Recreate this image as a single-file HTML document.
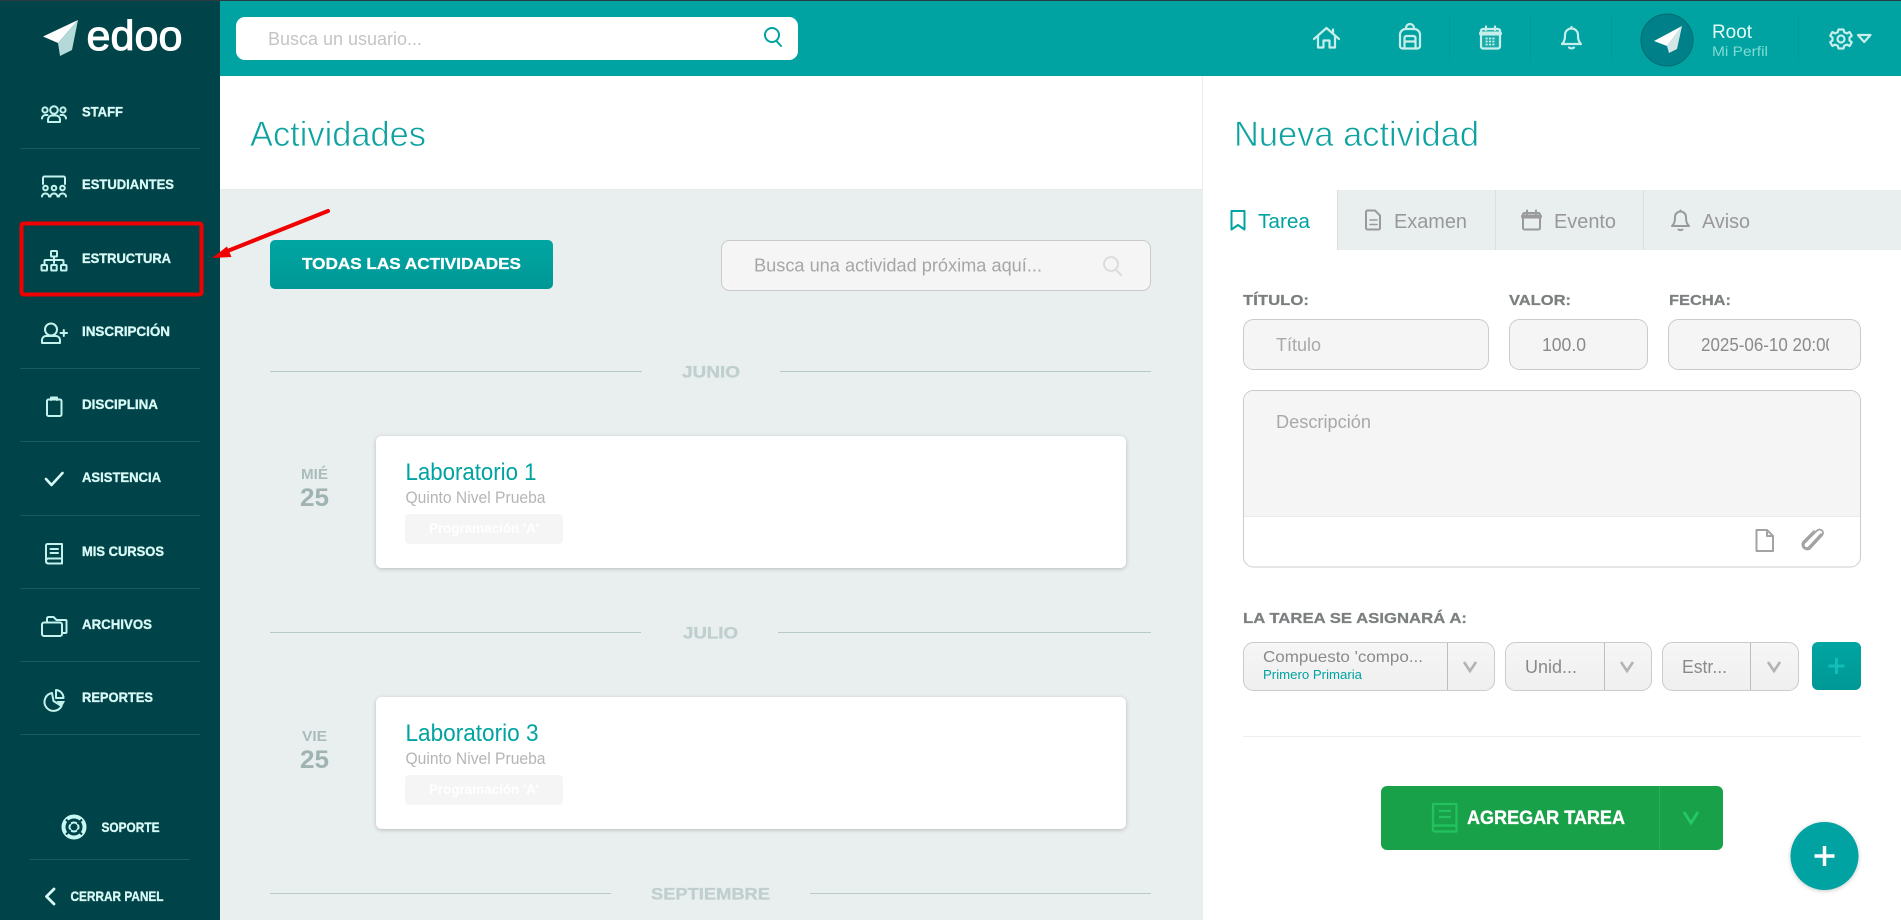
<!DOCTYPE html>
<html lang="es"><head><meta charset="utf-8"><title>Edoo - Actividades</title>
<style>
html,body{margin:0;padding:0;width:1901px;height:920px;overflow:hidden;background:#e9eeee}
svg{display:block}
text{font-family:"Liberation Sans",sans-serif}
.nav{font-size:14px;font-weight:700;fill:#d8f9f5;stroke:#d8f9f5;stroke-width:.35}
.ic{fill:none;stroke:#c4f3ee;stroke-width:2;stroke-linecap:round;stroke-linejoin:round}
.hi{fill:none;stroke:#c8eeeb;stroke-width:2.2;stroke-linecap:round;stroke-linejoin:round}
.tb{fill:none;stroke:#9a9a9a;stroke-width:2;stroke-linecap:round;stroke-linejoin:round}
.sep{stroke:#1b5a5e;stroke-width:1}
.lbl{font-size:15px;font-weight:700;fill:#7b7f7f;stroke:#7b7f7f;stroke-width:.25}
.ph{font-size:18px;fill:#a9a9a9}
.box{fill:#f5f5f5;stroke:#c9cccc;stroke-width:1}
.mes{font-size:17px;font-weight:700;fill:#bfcfce;stroke:#bfcfce;stroke-width:.3}
.ln{stroke:#b9c9c8;stroke-width:1}
.chev{fill:none;stroke:#b3b3b3;stroke-width:2.6}
.ttl{font-size:35px;fill:#0ea3a1;stroke:#fff;stroke-width:.7}
</style></head><body>
<svg width="1901" height="920" viewBox="0 0 1901 920" xmlns="http://www.w3.org/2000/svg">
<defs>
<linearGradient id="tg" x1="0" y1="0" x2="0" y2="1"><stop offset="0" stop-color="#00a5a2"/><stop offset="1" stop-color="#009896"/></linearGradient>
<linearGradient id="sg" x1="0" y1="0" x2="0" y2="1"><stop offset="0" stop-color="#f6f6f6"/><stop offset="1" stop-color="#efefef"/></linearGradient>
<filter id="sh" x="-5%" y="-10%" width="110%" height="125%"><feDropShadow dx="0" dy="1" stdDeviation="2" flood-color="#000" flood-opacity=".22"/></filter>
<clipPath id="fc"><rect x="1690" y="320" width="139" height="50"/></clipPath>
</defs>

<!-- base -->
<rect width="1901" height="920" fill="#e9eeee"/>
<rect x="220" y="76" width="982" height="114" fill="#fff"/>
<rect x="220" y="189" width="982" height="1" fill="#e6eaea"/>
<rect x="1203" y="76" width="698" height="844" fill="#fff"/>
<rect x="1203" y="190" width="698" height="60" fill="#e9eeee"/>

<!-- header -->
<rect x="220" y="0" width="1681" height="76" fill="#00a3a1"/>
<rect x="0" y="0" width="1901" height="1" fill="#2a3c40"/>
<rect x="236" y="17" width="562" height="43" rx="9" fill="#fff"/>
<text x="268" y="45" font-size="18" fill="#c4c4c4" textLength="154" lengthAdjust="spacingAndGlyphs">Busca un usuario...</text>
<g fill="none" stroke="#00a3a1" stroke-width="2" stroke-linecap="round"><circle cx="772" cy="35" r="7"/><path d="M776.500 41 L781 46"/></g>

<path d="M1449.500 16V61M1530.500 16V61M1611.500 16V61M1798.500 16V61" stroke="#019a98" stroke-width="1"/>
<!-- home -->
<g class="hi"><path d="M1314 39 L1326.500 28 L1339 39"/><path d="M1318 36 V47.500 H1323.500 V40.500 H1329.500 V47.500 H1335 V36"/><path d="M1333 29.500 V33"/></g>
<!-- backpack -->
<g class="hi"><path d="M1400 34 a6 6 0 0 1 6 -5 h8 a6 6 0 0 1 6 5 V46 a2.500 2.500 0 0 1 -2.500 2.500 H1402.500 A2.500 2.500 0 0 1 1400 46 Z"/><path d="M1406 28 a4 4 0 0 1 8 0"/><path d="M1404.500 48 V38 a2 2 0 0 1 2 -2 h7 a2 2 0 0 1 2 2 V48"/><path d="M1405 41.500 H1415"/></g>
<!-- calendar -->
<g class="hi"><rect x="1481" y="29" width="19" height="19.500" rx="2" fill="#c8eeeb" fill-opacity=".12"/><path d="M1481 33.500 H1500" stroke-width="4"/><path d="M1486 26.500 V30M1495 26.500 V30"/><path d="M1485.500 38.500 h10M1485.500 41.500 h10M1485.500 44.500 h10" stroke-width="1.800" stroke-dasharray="2.200 1.200" stroke-linecap="butt"/></g>
<!-- bell -->
<g class="hi"><path d="M1562 44 C1565 41 1565 38 1565 35 a6.500 6.500 0 0 1 13 0 C1578 38 1578 41 1581 44 Z"/><path d="M1571.500 27 V28.500"/><path d="M1569 47.500 a3 2 0 0 0 5 0" fill="#c8eeeb"/></g>
<!-- avatar -->
<circle cx="1667" cy="40" r="26" fill="#008088" stroke="#016c70" stroke-width="1"/>
<path d="M1654 41 L1682 26 L1667 46 Z" fill="#fff"/>
<path d="M1682 26 L1677 49 L1669 53 L1667 46 Z" fill="#d3e6e6"/>
<text x="1712" y="38" font-size="19" fill="#e4fbf8" textLength="40" lengthAdjust="spacingAndGlyphs">Root</text>
<text x="1712" y="56" font-size="14" fill="#7fdcd4" textLength="56" lengthAdjust="spacingAndGlyphs">Mi Perfil</text>
<!-- gear -->
<g class="hi" stroke-width="1.900"><circle cx="1841" cy="39" r="3.500"/><path d="M1838.500 29.500 h5 l.8 2.800 2.700 1.100 2.600 -1.400 2.200 3.800 -2.300 1.800 v2.800 l2.300 1.800 -2.200 3.800 -2.600 -1.400 -2.700 1.100 -.8 2.800 h-5 l-.8 -2.800 -2.700 -1.100 -2.600 1.400 -2.200 -3.800 2.300 -1.800 v-2.800 l-2.300 -1.800 2.200 -3.800 2.600 1.400 2.700 -1.100 Z"/><path d="M1858 35 H1870.500 L1864.200 42 Z"/></g>

<!-- sidebar -->
<rect x="0" y="1" width="220" height="919" fill="#004349"/>
<path d="M43 36.500 L78 20 L58 43 Z" fill="#fff"/>
<path d="M78 20 L72 50 L60 56 L58 43 Z" fill="#b3d9d8"/>
<text x="86.500" y="50" font-size="42" fill="#fff" stroke="#fff" stroke-width="1" textLength="96" lengthAdjust="spacingAndGlyphs">edoo</text>

<path class="sep" d="M20 148.500H200M20 368.500H200M20 441.500H200M20 515.500H200M20 588.500H200M20 661.500H200M20 734.500H200M30 859.500H190"/>

<text class="nav" x="82" y="116.500" textLength="41" lengthAdjust="spacingAndGlyphs">STAFF</text>
<text class="nav" x="82" y="189" textLength="92" lengthAdjust="spacingAndGlyphs">ESTUDIANTES</text>
<text class="nav" x="82" y="263" textLength="89" lengthAdjust="spacingAndGlyphs">ESTRUCTURA</text>
<text class="nav" x="82" y="336" textLength="88" lengthAdjust="spacingAndGlyphs">INSCRIPCIÓN</text>
<text class="nav" x="82" y="409" textLength="76" lengthAdjust="spacingAndGlyphs">DISCIPLINA</text>
<text class="nav" x="82" y="482" textLength="79" lengthAdjust="spacingAndGlyphs">ASISTENCIA</text>
<text class="nav" x="82" y="556" textLength="82" lengthAdjust="spacingAndGlyphs">MIS CURSOS</text>
<text class="nav" x="82" y="629" textLength="70" lengthAdjust="spacingAndGlyphs">ARCHIVOS</text>
<text class="nav" x="82" y="702" textLength="71" lengthAdjust="spacingAndGlyphs">REPORTES</text>
<text class="nav" x="101.500" y="832" textLength="58" lengthAdjust="spacingAndGlyphs">SOPORTE</text>
<text class="nav" x="70.500" y="901" textLength="93" lengthAdjust="spacingAndGlyphs">CERRAR PANEL</text>

<!-- staff icon -->
<g class="ic" stroke-width="1.900"><circle cx="54" cy="110" r="3.800"/><circle cx="45" cy="110" r="2.600"/><circle cx="63" cy="110" r="2.600"/><path d="M48 122 v-2.500 a4 4 0 0 1 4 -4 h4 a4 4 0 0 1 4 4 V122 Z"/><path d="M42 118.500 a3.500 3.500 0 0 1 3.500 -3.500 h2M66 118.500 a3.500 3.500 0 0 0 -3.500 -3.500 h-2"/></g>
<!-- estudiantes icon -->
<g class="ic" stroke-width="1.900"><path d="M43 184 V178 a1.500 1.500 0 0 1 1.500 -1.500 h19 a1.500 1.500 0 0 1 1.500 1.500 V184"/><circle cx="45.500" cy="188" r="2.300"/><circle cx="54" cy="188" r="2.300"/><circle cx="62.500" cy="188" r="2.300"/><path d="M42 196.500 a3.500 3 0 0 1 7 0M50.500 196.500 a3.500 3 0 0 1 7 0M59 196.500 a3.500 3 0 0 1 7 0"/></g>
<!-- estructura icon -->
<g class="ic" stroke-width="1.900"><rect x="51" y="251" width="6" height="5.500" rx=".8"/><path d="M54 257 V263M44.500 264.500 V261 a1 1 0 0 1 1 -1 h17 a1 1 0 0 1 1 1 V264.500"/><rect x="41.500" y="265" width="5.500" height="5.500" rx=".8"/><rect x="51.200" y="265" width="5.500" height="5.500" rx=".8"/><rect x="61" y="265" width="5.500" height="5.500" rx=".8"/></g>
<!-- inscripcion icon -->
<g class="ic" stroke-width="1.900"><circle cx="51" cy="329.500" r="6"/><path d="M42 343 v-3 a4 4 0 0 1 4 -4 h10 a4 4 0 0 1 4 4 v3 Z"/><path d="M60.500 333 H67M63.800 330 V336"/></g>
<!-- disciplina icon -->
<g class="ic" stroke-width="1.900"><rect x="47" y="399.500" width="14.500" height="16.500" rx="1.500"/><path d="M51 400 V397.500 h6 V400" /></g>
<!-- asistencia icon -->
<path d="M46 479 L51.500 485 L62.500 473" fill="none" stroke="#d8f9f5" stroke-width="2.600" stroke-linecap="round" stroke-linejoin="round"/>
<!-- mis cursos icon -->
<g class="ic" stroke-width="1.900"><path d="M46 561 V545.500 a1.500 1.500 0 0 1 1.500 -1.500 H62 V563.500 H48 a2.500 2.500 0 0 1 -2 -2.500 a2.500 2.500 0 0 1 2 -2.500 H62"/><path d="M50.500 549H58M50.500 553H58"/></g>
<!-- archivos icon -->
<g class="ic" stroke-width="1.900"><path d="M47 622 V618.500 a1.500 1.500 0 0 1 1.500 -1.500 h5 l3 3 h9 a1 1 0 0 1 1 1 v11 a1 1 0 0 1 -1 1 H62.500"/><rect x="42" y="622.500" width="20" height="13.500" rx="2"/></g>
<!-- reportes icon -->
<g class="ic" stroke-width="2"><path d="M52 693 a9 9 0 1 0 9.500 13 L53.500 701 Z"/><path d="M56 690 a8 8 0 0 1 7.500 8 H56 Z"/></g>
<path d="M56.500 701 H65 L62 706.500 Z" fill="#c4f3ee"/>
<!-- soporte icon -->
<circle cx="74" cy="827" r="10.500" fill="none" stroke="#c8f8f3" stroke-width="4"/>
<circle cx="74" cy="827" r="4.500" fill="none" stroke="#c8f8f3" stroke-width="2"/>
<path d="M66 819.500 L70.500 824M82 819.500 L77.500 824M66 834.500 L70.500 830M82 834.500 L77.500 830" stroke="#004349" stroke-width="2"/>
<!-- cerrar -->
<path d="M54 889 L46.500 896.500 L54 904" fill="none" stroke="#d8f9f5" stroke-width="2.800" stroke-linecap="round" stroke-linejoin="round"/>

<!-- titles -->
<text class="ttl" x="250" y="146" textLength="176" lengthAdjust="spacingAndGlyphs">Actividades</text>
<text class="ttl" x="1234" y="146" textLength="245" lengthAdjust="spacingAndGlyphs">Nueva actividad</text>

<!-- tabs -->
<rect x="1203" y="190" width="134" height="60" fill="#fff"/>
<path d="M1337.500 190V250M1495.500 190V250M1643.500 190V250" stroke="#d9dfdf" stroke-width="1"/>
<path d="M1231.500 211 h13 v18.500 l-6.500 -4.500 -6.500 4.500 Z" fill="none" stroke="#00a3a1" stroke-width="2" stroke-linejoin="round"/>
<text x="1258" y="228" font-size="20" fill="#00a3a1" textLength="52" lengthAdjust="spacingAndGlyphs">Tarea</text>
<g class="tb"><path d="M1366 212 a1.500 1.500 0 0 1 1.500 -1.500 h7.500 l5 5 v12.500 a1.500 1.500 0 0 1 -1.500 1.500 h-11 a1.500 1.500 0 0 1 -1.500 -1.500 Z"/><path d="M1370 220 h7M1370 224.500 h7" stroke-width="1.600"/></g>
<text x="1394" y="228" font-size="20" fill="#999" textLength="73" lengthAdjust="spacingAndGlyphs">Examen</text>
<g class="tb"><rect x="1523" y="213" width="17" height="16.500" rx="1.500"/><path d="M1523 216.500 H1540" stroke-width="4"/><path d="M1527 210.500 V214M1536 210.500 V214"/></g>
<text x="1554" y="228" font-size="20" fill="#999" textLength="62" lengthAdjust="spacingAndGlyphs">Evento</text>
<g class="tb" stroke-width="1.800"><path d="M1672 226 C1675 223 1675 220 1675 217 a5.500 5.500 0 0 1 11 0 C1686 220 1686 223 1689 226 Z"/><path d="M1680.500 210.500 V211.500"/><path d="M1678.500 229.500 a2.500 1.500 0 0 0 4 0" fill="#9a9a9a"/></g>
<text x="1702" y="228" font-size="20" fill="#999" textLength="48" lengthAdjust="spacingAndGlyphs">Aviso</text>

<!-- left toolbar -->
<rect x="270" y="240" width="283" height="49" rx="5" fill="url(#tg)"/>
<text x="302" y="269" font-size="16" font-weight="700" fill="#fff" stroke="#fff" stroke-width=".3" textLength="219" lengthAdjust="spacingAndGlyphs">TODAS LAS ACTIVIDADES</text>
<rect x="721.500" y="240.500" width="429" height="50" rx="8" class="box"/>
<text x="754" y="271.500" font-size="18" fill="#a6a6a6" textLength="288" lengthAdjust="spacingAndGlyphs">Busca una actividad próxima aquí...</text>
<g fill="none" stroke="#dcdcdc" stroke-width="2" stroke-linecap="round"><circle cx="1111" cy="264" r="7"/><path d="M1116 270 L1121 275"/></g>

<!-- JUNIO -->
<path class="ln" d="M270 371.500H642M780 371.500H1151"/>
<text class="mes" x="682" y="377.500" textLength="58" lengthAdjust="spacingAndGlyphs">JUNIO</text>
<text x="301" y="479" font-size="15" font-weight="700" fill="#a9bdbd" textLength="27" lengthAdjust="spacingAndGlyphs">MIÉ</text>
<text x="300" y="506" font-size="25" font-weight="700" fill="#a0b3b3" textLength="29" lengthAdjust="spacingAndGlyphs">25</text>
<rect x="376" y="436" width="750" height="132" rx="6" fill="#fff" filter="url(#sh)"/>
<text x="405.500" y="480" font-size="24" fill="#00a3a1" textLength="131" lengthAdjust="spacingAndGlyphs">Laboratorio 1</text>
<text x="405.500" y="503" font-size="16.500" fill="#b5b5b5" textLength="140" lengthAdjust="spacingAndGlyphs">Quinto Nivel Prueba</text>
<rect x="405" y="514" width="158" height="30" rx="4" fill="#f5f5f5"/>
<text x="429" y="533" font-size="14" font-weight="700" fill="#fff" textLength="110" lengthAdjust="spacingAndGlyphs">Programación 'A'</text>

<!-- JULIO -->
<path class="ln" d="M270 632.500H641M778 632.500H1151"/>
<text class="mes" x="683" y="638.500" textLength="55" lengthAdjust="spacingAndGlyphs">JULIO</text>
<text x="302" y="741" font-size="15" font-weight="700" fill="#a9bdbd" textLength="25" lengthAdjust="spacingAndGlyphs">VIE</text>
<text x="300" y="768" font-size="25" font-weight="700" fill="#a0b3b3" textLength="29" lengthAdjust="spacingAndGlyphs">25</text>
<rect x="376" y="697" width="750" height="132" rx="6" fill="#fff" filter="url(#sh)"/>
<text x="405.500" y="741" font-size="24" fill="#00a3a1" textLength="133" lengthAdjust="spacingAndGlyphs">Laboratorio 3</text>
<text x="405.500" y="764" font-size="16.500" fill="#b5b5b5" textLength="140" lengthAdjust="spacingAndGlyphs">Quinto Nivel Prueba</text>
<rect x="405" y="775" width="158" height="30" rx="4" fill="#f5f5f5"/>
<text x="429" y="794" font-size="14" font-weight="700" fill="#fff" textLength="110" lengthAdjust="spacingAndGlyphs">Programación 'A'</text>

<!-- SEPTIEMBRE -->
<path class="ln" d="M270 893.500H611M810 893.500H1151"/>
<text class="mes" x="651" y="899.500" textLength="119" lengthAdjust="spacingAndGlyphs">SEPTIEMBRE</text>

<!-- form -->
<text class="lbl" x="1243" y="305" textLength="66" lengthAdjust="spacingAndGlyphs">TÍTULO:</text>
<text class="lbl" x="1509" y="305" textLength="62" lengthAdjust="spacingAndGlyphs">VALOR:</text>
<text class="lbl" x="1669" y="305" textLength="62" lengthAdjust="spacingAndGlyphs">FECHA:</text>
<rect class="box" x="1243.500" y="319.500" width="245" height="50" rx="10"/>
<rect class="box" x="1509.500" y="319.500" width="138" height="50" rx="10"/>
<rect class="box" x="1668.500" y="319.500" width="192" height="50" rx="10"/>
<text class="ph" x="1276" y="351" textLength="45" lengthAdjust="spacingAndGlyphs">Título</text>
<text x="1542" y="351" font-size="18" fill="#8a8a8a" textLength="44" lengthAdjust="spacingAndGlyphs">100.0</text>
<text x="1701" y="351" font-size="18" fill="#8a8a8a" clip-path="url(#fc)" textLength="134" lengthAdjust="spacingAndGlyphs">2025-06-10 20:00</text>

<rect x="1243.500" y="390.500" width="617" height="176.500" rx="10" fill="#fff" stroke="#c9cccc"/>
<path d="M1244 516 V401 a10 10 0 0 1 10 -10 H1850 a10 10 0 0 1 10 10 V516 Z" fill="#f5f5f5"/>
<path d="M1244 516.500H1860" stroke="#ececec"/>
<text class="ph" x="1276" y="428" textLength="95" lengthAdjust="spacingAndGlyphs">Descripción</text>
<path d="M1756.500 530 h10.500 l6 6 v15 h-16.500 Z M1767 530 v6 h6" fill="none" stroke="#a3a3a3" stroke-width="2" stroke-linejoin="round"/>
<path d="M1821 534 L1809 547 a3 3 0 0 1 -4.500 -4 L1817 530.500 a3.500 3.500 0 0 1 5 5 L1809.500 549 a5 5 0 0 1 -6.500 -7 L1814 531" fill="none" stroke="#a3a3a3" stroke-width="1.700" stroke-linecap="round"/>

<text class="lbl" x="1243" y="623" textLength="224" lengthAdjust="spacingAndGlyphs">LA TAREA SE ASIGNARÁ A:</text>

<rect x="1243.500" y="642.500" width="251" height="48" rx="10" fill="url(#sg)" stroke="#c9cccc"/>
<path d="M1447.500 643V690" stroke="#bdbdbd"/>
<text x="1263" y="662" font-size="16" fill="#8a8a8a" textLength="160" lengthAdjust="spacingAndGlyphs">Compuesto 'compo...</text>
<text x="1263" y="679" font-size="13" fill="#00a3a1" textLength="99" lengthAdjust="spacingAndGlyphs">Primero Primaria</text>
<path class="chev" d="M1464 662 L1470 671 L1476 662"/>

<rect x="1505.500" y="642.500" width="146" height="48" rx="10" fill="url(#sg)" stroke="#c9cccc"/>
<path d="M1604.500 643V690" stroke="#bdbdbd"/>
<text x="1525" y="673" font-size="18" fill="#8a8a8a" textLength="52" lengthAdjust="spacingAndGlyphs">Unid...</text>
<path class="chev" d="M1621 662 L1627 671 L1633 662"/>

<rect x="1662.500" y="642.500" width="136" height="48" rx="10" fill="url(#sg)" stroke="#c9cccc"/>
<path d="M1750.500 643V690" stroke="#bdbdbd"/>
<text x="1682" y="673" font-size="18" fill="#8a8a8a" textLength="45" lengthAdjust="spacingAndGlyphs">Estr...</text>
<path class="chev" d="M1768 662 L1774 671 L1780 662"/>

<rect x="1812" y="642" width="49" height="48" rx="6" fill="url(#tg)"/>
<path d="M1836.500 658V674M1828.500 666H1844.500" stroke="#12bdb8" stroke-width="3"/>

<path d="M1243 736.500H1861" stroke="#eeeeee"/>

<rect x="1381" y="786" width="342" height="64" rx="6" fill="#19a14a"/>
<path d="M1659.500 786V850" stroke="#23b257"/>
<g fill="none" stroke="#22c25f" stroke-width="2.200" stroke-linejoin="round"><path d="M1433 828 V804 H1456.500 V831.500 H1436 a2.500 2.500 0 0 1 -3 -3.500 a2.500 2.500 0 0 1 3 -2.500 H1456.500"/><path d="M1439 811 H1451M1439 817 H1451"/></g>
<text x="1467" y="824" font-size="19" font-weight="700" fill="#fff" stroke="#fff" stroke-width=".3" textLength="158" lengthAdjust="spacingAndGlyphs">AGREGAR TAREA</text>
<path d="M1684 812 L1691 823 L1698 812" fill="none" stroke="#25c866" stroke-width="2.800"/>

<circle cx="1824.500" cy="856" r="34" fill="#00a3a1" filter="url(#sh)"/>
<path d="M1824.500 846V866M1814.500 856H1834.500" stroke="#fff" stroke-width="3.500"/>

<!-- red annotation -->
<rect x="21.500" y="223.500" width="180" height="71" rx="2" fill="none" stroke="#f00000" stroke-width="4"/>
<path d="M328 211 L225 252" stroke="#f00000" stroke-width="4" stroke-linecap="round"/>
<path d="M212 258 L227 246.500 L231.500 257 Z" fill="#f00000"/>
</svg>
</body></html>
